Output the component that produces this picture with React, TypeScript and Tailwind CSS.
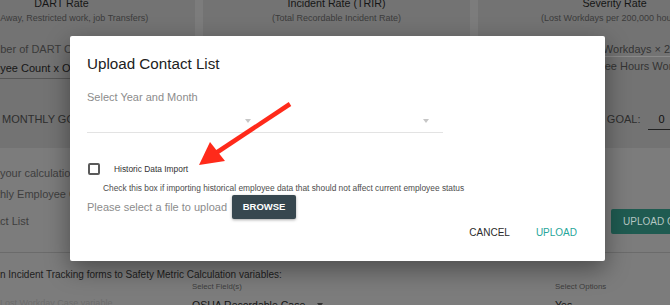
export default function App() {
  return (
    <div className="relative h-[305px] w-[670px] overflow-hidden bg-[#7c7c7c] font-['Liberation_Sans',Arial,sans-serif]">
      {/* ── Dimmed page behind the dialog (scrolled, wider than the window) ── */}
      <div className="-mt-[12px] -ml-[72px] w-[817px]">
        <div className="flex gap-[8px]">
          {/* DART */}
          <div className="h-[160px] w-[267px] bg-[#737373] pt-[8px]">
            <div className="text-center text-[10.7px] leading-[14px] text-[#151515]">DART Rate</div>
            <div className="mt-[2px] whitespace-nowrap text-center text-[9px] leading-[12px] text-[#3b3b3b]">
              (Days Away, Restricted work, job Transfers)
            </div>
            <div className="mt-[18px] whitespace-nowrap pl-[49px] text-[11px] leading-[14px] text-[#3a3a3a]">
              Number of DART Cases × 200,000
            </div>
            <div className="mt-[5px] ml-[20px] whitespace-nowrap border-b border-[#555] pb-[3px] pl-[21px] text-[11px] leading-[14px] text-[#161616]">
              Employee Count x OSHA Hours
            </div>
            <div className="mt-[33px] whitespace-nowrap pl-[74px] text-[11px] leading-[14px] text-[#2e2e2e]">
              MONTHLY GOAL:
            </div>
          </div>

          {/* TRIR */}
          <div className="h-[160px] w-[267px] bg-[#737373] pt-[8px]">
            <div className="text-center text-[10.7px] leading-[14px] text-[#151515]">Incident Rate (TRIR)</div>
            <div className="mt-[2px] whitespace-nowrap text-center text-[9px] leading-[12px] text-[#3b3b3b]">
              (Total Recordable Incident Rate)
            </div>
          </div>

          {/* Severity */}
          <div className="h-[160px] w-[267px] bg-[#737373] pt-[8px]">
            <div className="pl-[6px] text-center text-[10.7px] leading-[14px] text-[#151515]">Severity Rate</div>
            <div className="mt-[2px] whitespace-nowrap text-center text-[9px] leading-[12px] text-[#3b3b3b]">
              (Lost Workdays per 200,000 hours)
            </div>
            <div className="mt-[18px] ml-[80px] whitespace-nowrap border-b border-[#8a8a8a] pl-[21px] text-[11px] leading-[14px] text-[#333]">
              Lost Workdays × 200,000
            </div>
            <div className="mt-[2px] whitespace-nowrap pl-[90px] text-[11px] leading-[14px] text-[#333]">
              Employee Hours Worked
            </div>
            <div className="mt-[39px] flex items-start pl-[73px]">
              <span className="whitespace-nowrap text-[11px] leading-[14px] text-[#2e2e2e]">MONTHLY GOAL:</span>
              <span className="ml-[8px] w-[60px] border-b border-[#222] pb-[3px] pl-[10px] text-[11px] leading-[14px] text-[#111]">
                0
              </span>
            </div>
          </div>
        </div>

        {/* contact list section */}
        <div className="h-[105px] border-b border-[#6b6b6b] pt-[18px] text-[11px] leading-[15px] text-[#3e3e3e]">
          <div className="whitespace-nowrap pl-[72px]">your calculations will be based on the values below.</div>
          <div className="mt-[6px] whitespace-nowrap pl-[47.5px]">Monthly Employee Count and OSHA Hours</div>
          <div className="mt-[7px] flex h-[25px] items-center justify-between">
            <span className="whitespace-nowrap pl-[42.7px]">Contact List</span>
            <span className="flex h-[25px] w-[134px] items-center whitespace-nowrap rounded-[2px] bg-[#1f5b51] px-[12px] text-[10px] text-[#b4c6c2]">
              UPLOAD CONTACT LIST
            </span>
          </div>
        </div>

        {/* field mapping section */}
        <div className="pt-[15px]">
          <div className="whitespace-nowrap pl-[21.4px] text-[10px] leading-[13px] text-[#202020]">
            Map fields in Incident Tracking forms to Safety Metric Calculation variables:
          </div>
          <div className="mt-[1px] grid grid-cols-[264px_363px_1fr]">
            <div className="whitespace-nowrap pl-[72px] pt-[14px] text-[9px] leading-[14px] text-[#6c6c6c]">
              Lost Workday Case variable
            </div>
            <div>
              <div className="text-[7.8px] leading-[10px] text-[#3d3d3d]">Select Field(s)</div>
              <div className="mt-[6px] flex items-center">
                <span className="whitespace-nowrap text-[10.5px] leading-[14px] text-[#141414]">OSHA Recordable Case</span>
                <span className="ml-[12px] h-0 w-0 border-x-[3.5px] border-t-[4px] border-x-transparent border-t-[#333]" />
              </div>
            </div>
            <div>
              <div className="text-[7.9px] leading-[10px] text-[#3d3d3d]">Select Options</div>
              <div className="mt-[6px] text-[10.5px] leading-[14px] text-[#141414]">Yes</div>
            </div>
          </div>
        </div>
      </div>

      {/* ── Upload dialog ── */}
      <div className="absolute left-[70px] top-[36px] flex h-[225px] w-[535px] flex-col rounded-[2px] bg-white pl-[17px] pr-[20px] pt-[18px] shadow-[0_8px_24px_rgba(0,0,0,0.4)]">
        <h2 className="text-[15.2px] leading-[20px] text-[#212121]">Upload Contact List</h2>
        <div className="mt-[16px] text-[11px] leading-[14px] text-[#8c8c8c]">Select Year and Month</div>
        <div className="mt-[6px] flex h-[23px] w-[356px] border-b border-[#e3e3e3]">
          <div className="flex w-[170px] items-center justify-end pr-[6px]">
            <span className="h-0 w-0 border-x-[3.5px] border-t-[4px] border-x-transparent border-t-[#c6c6c6]" />
          </div>
          <div className="flex flex-1 items-center justify-end pr-[14px]">
            <span className="h-0 w-0 border-x-[3.5px] border-t-[4px] border-x-transparent border-t-[#c6c6c6]" />
          </div>
        </div>

        <div className="mt-[30px] flex items-center">
          <span className="ml-[1px] h-[12px] w-[12px] rounded-[2px] border-2 border-[#5a5a5a]" />
          <span className="ml-[14px] text-[8.4px] leading-[12px] text-[#333]">Historic Data Import</span>
        </div>
        <div className="mt-[8px] whitespace-nowrap pl-[16px] text-[8.35px] leading-[10px] text-[#4d4d4d]">
          Check this box if importing historical employee data that should not affect current employee status
        </div>

        <div className="mt-[2px] flex items-center">
          <span className="text-[11px] leading-[14px] text-[#8c8c8c]">Please select a file to upload</span>
          <button className="ml-[5px] flex h-[24px] w-[64px] items-center justify-center rounded-[2px] bg-[#37474f] text-[9.5px] font-bold text-white shadow-[0_1px_3px_rgba(0,0,0,0.35)]">
            BROWSE
          </button>
        </div>

        <div className="mt-[1px] flex justify-end">
          <button className="flex h-[24px] items-center px-[8px] text-[10px] text-[#2b2b2b]">CANCEL</button>
          <button className="ml-[10px] flex h-[24px] items-center px-[8px] text-[10px] text-[#26a69a]">UPLOAD</button>
        </div>
      </div>

      {/* ── Red annotation arrow ── */}
      <svg className="pointer-events-none absolute inset-0" width="670" height="305" viewBox="0 0 670 305">
        <line x1="290" y1="104" x2="216" y2="153" stroke="#ff2a1a" strokeWidth="4.5" />
        <polygon points="199,165 210,142 225,161" fill="#ff2a1a" />
      </svg>
    </div>
  );
}
